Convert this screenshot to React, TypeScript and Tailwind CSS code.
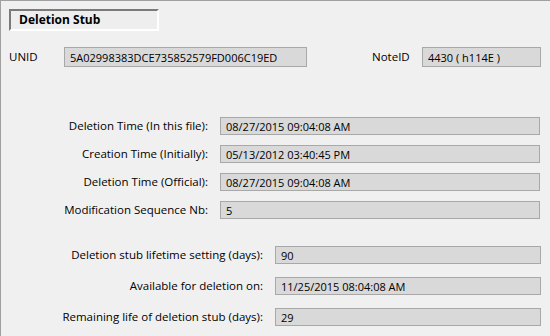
const font = { fontFamily: '"Open Sans", "Noto Sans", sans-serif' };

function Field({ value, className }: { value: string; className: string }) {
  return (
    <div
      className={`h-[18px] flex items-center pl-[5px] bg-[#d9d9d9] border border-[#a8a8a8] text-[11px] text-black leading-none ${className}`}
    >
      {value}
    </div>
  );
}

function Row({ label, value, labelW, fieldW }: { label: string; value: string; labelW: string; fieldW: string }) {
  return (
    <div className="flex items-center">
      <div className={`${labelW} text-right text-[11.5px] text-black leading-none`}>{label}</div>
      <Field value={value} className={`ml-[12px] ${fieldW}`} />
    </div>
  );
}

export default function App() {
  return (
    <div
      className="w-[550px] h-[336px] bg-[#f0f0f0] border-t border-l border-[#a0a0a0] flex flex-col overflow-hidden"
      style={font}
    >
      <div className="ml-[8px] mt-[8px] w-[150px] h-[22px] border-t-2 border-l-2 border-t-[#7a7a7a] border-l-[#7a7a7a] border-b-2 border-r-2 border-b-white border-r-white bg-[#eeeeee] flex items-center pl-[8px]">
        <span className="text-[12px] font-bold text-black leading-none">Deletion Stub</span>
      </div>

      <div className="flex items-center mt-[16px] h-[20px]">
        <div className="ml-[8px] w-[55px] text-[11.5px] text-black leading-none">UNID</div>
        <Field value="5A02998383DCE735852579FD006C19ED" className="!h-[20px] w-[243px]" />
        <div className="ml-[65px] w-[50px] text-[11.5px] text-black leading-none">NoteID</div>
        <Field value="4430 ( h114E )" className="!h-[20px] w-[119px]" />
      </div>

      <div className="flex flex-col gap-[10px] mt-[50px]">
        <Row label="Deletion Time (In this file):" value="08/27/2015 09:04:08 AM" labelW="w-[207px]" fieldW="w-[320px]" />
        <Row label="Creation Time (Initially):" value="05/13/2012 03:40:45 PM" labelW="w-[207px]" fieldW="w-[320px]" />
        <Row label="Deletion Time (Official):" value="08/27/2015 09:04:08 AM" labelW="w-[207px]" fieldW="w-[320px]" />
        <Row label="Modification Sequence Nb:" value="5" labelW="w-[207px]" fieldW="w-[320px]" />
      </div>

      <div className="flex flex-col gap-[13px] mt-[27px]">
        <Row label="Deletion stub lifetime setting (days):" value="90" labelW="w-[262px]" fieldW="w-[266px]" />
        <Row label="Available for deletion on:" value="11/25/2015 08:04:08 AM" labelW="w-[262px]" fieldW="w-[266px]" />
        <Row label="Remaining life of deletion stub (days):" value="29" labelW="w-[262px]" fieldW="w-[266px]" />
      </div>
    </div>
  );
}
